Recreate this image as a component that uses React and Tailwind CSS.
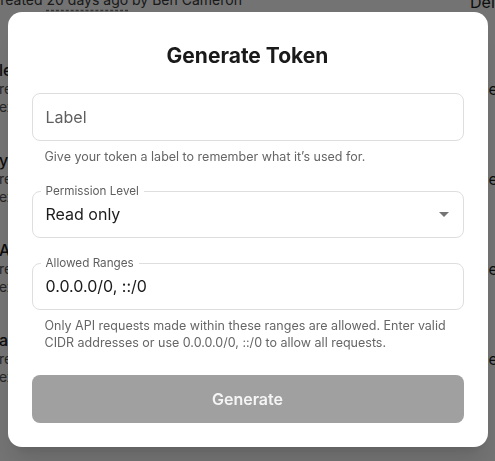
import { useState } from "react";

const rows = [
  { title: "ledger-sync", scope: "read & write", meta: "expires in 30 days" },
  { title: "yarn-registry", scope: "read only", meta: "expires in 90 days" },
  { title: "Alerts bot", scope: "read only", meta: "expires never" },
  { title: "analytics-export", scope: "read only", meta: "expires in 7 days" },
];

function BackgroundPage() {
  return (
    <div className="h-screen w-full overflow-hidden bg-white text-[#1b1b1b]">
      <div className="-mt-[10px] flex h-5 items-start text-sm leading-5">
        <span className="-ml-[10px] flex-1 whitespace-nowrap text-[#3a3a3a]">
          Created{" "}
          <span className="underline decoration-dashed decoration-[#777] underline-offset-[5px]">
            20 days ago
          </span>{" "}
          by Ben Cameron
        </span>
        <span className="w-[25px] shrink-0 whitespace-nowrap text-base">Delete</span>
      </div>
      <div className="mt-[50px] flex flex-col">
        {rows.map((row) => (
          <div key={row.title} className="flex h-[90px] items-start">
            <div className="-ml-px flex-1">
              <p className="text-base leading-5 font-medium whitespace-nowrap">{row.title}</p>
              <p className="text-sm leading-[18px] text-[#555] whitespace-nowrap">{row.scope}</p>
              <p className="text-sm leading-[18px] text-[#555] whitespace-nowrap">{row.meta}</p>
            </div>
            <span className="mt-[17px] w-[18px] shrink-0 whitespace-nowrap text-base">Delete</span>
          </div>
        ))}
      </div>
    </div>
  );
}

function OutlinedField({ label, children }) {
  return (
    <fieldset className="rounded-lg border border-[#dedede]">
      <legend className="ml-[8px] px-[5px] text-[11.7px] leading-[15px] text-[#5f5f5f]">
        {label}
      </legend>
      <div className="flex h-[38px] items-start justify-between pt-[3px] pl-[13px] pr-[14px]">
        {children}
      </div>
    </fieldset>
  );
}

export default function App() {
  const [label, setLabel] = useState("");

  return (
    <div className="relative font-['Inter',sans-serif]">
      <BackgroundPage />
      <div className="fixed inset-0 flex justify-center bg-black/55 pt-3">
        <div className="h-fit w-[480px] rounded-[14px] bg-white px-6 pt-[30px] pb-6 shadow-xl">
          <h2 className="text-center text-[21px] leading-7 font-bold text-[#1a1a1a]">
            Generate Token
          </h2>

          <input
            value={label}
            onChange={(e) => setLabel(e.target.value)}
            placeholder="Label"
            className="mt-[23px] h-12 w-full rounded-lg border border-[#dedede] px-[13px] text-base text-[#1a1a1a] outline-none placeholder:text-[#5f5f5f]"
          />
          <p className="mt-[7px] px-[13px] text-[12.5px] leading-[17px] text-[#666]">
            Give your token a label to remember what it’s used for.
          </p>

          <div className="mt-[19px]">
            <OutlinedField label="Permission Level">
              <span className="text-base leading-6 text-[#1c1c1c]">Read only</span>
              <svg width="10" height="5" viewBox="0 0 10 5" className="mt-[10px]">
                <path d="M0 0l5 5 5-5z" fill="#757575" />
              </svg>
            </OutlinedField>
          </div>

          <div className="mt-[18px]">
            <OutlinedField label="Allowed Ranges">
              <span className="text-base leading-6 text-[#1c1c1c]">0.0.0.0/0, ::/0</span>
            </OutlinedField>
          </div>
          <p className="mt-[7px] px-[13px] text-[12.5px] leading-[17px] text-[#666]">
            Only API requests made within these ranges are allowed. Enter valid CIDR
            addresses or use 0.0.0.0/0, ::/0 to allow all requests.
          </p>

          <button
            disabled
            className="mt-6 h-12 w-full rounded-lg bg-[#a0a0a0] text-base font-semibold text-[#f5f5f5]"
          >
            Generate
          </button>
        </div>
      </div>
    </div>
  );
}
